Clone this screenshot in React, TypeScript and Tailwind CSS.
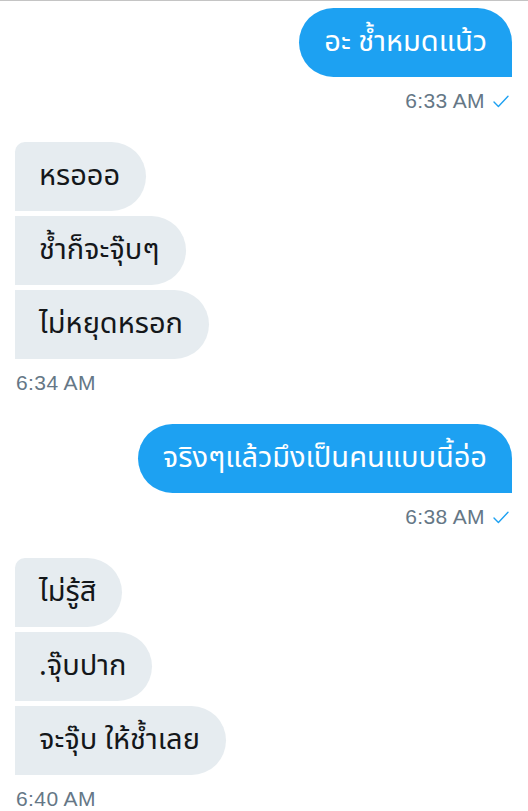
import React from 'react';

type Msg = { text: string };

interface Group {
  side: 'me' | 'them';
  messages: Msg[];
  time: string;
}

const groups: Group[] = [
  { side: 'me', messages: [{ text: 'อะ ช้ำหมดแน้ว' }], time: '6:33 AM' },
  {
    side: 'them',
    messages: [{ text: 'หรอออ' }, { text: 'ช้ำก็จะจุ๊บๆ' }, { text: 'ไม่หยุดหรอก' }],
    time: '6:34 AM',
  },
  { side: 'me', messages: [{ text: 'จริงๆแล้วมึงเป็นคนแบบนี้อ่อ' }], time: '6:38 AM' },
  {
    side: 'them',
    messages: [{ text: 'ไม่รู้สิ' }, { text: '.จุ๊บปาก' }, { text: 'จะจุ๊บ ให้ช้ำเลย' }],
    time: '6:40 AM',
  },
];

const Check = () => (
  <svg width="16" height="13" viewBox="0 0 16 13" fill="none" className="ml-[8px]">
    <path d="M1 7 L5.4 11.4 L15 1.2" stroke="#1DA1F2" strokeWidth="1.4" strokeLinecap="round" strokeLinejoin="round" />
  </svg>
);

const App: React.FC = () => {
  return (
    <div
      className="w-[528px] h-[811px] overflow-hidden bg-white border-t border-[#c4c4c4] pt-[7px] px-[15px]"
      style={{ fontFamily: '"Noto Sans Thai", "Noto Sans", "Liberation Sans", sans-serif' }}
    >
      {groups.map((g, gi) => (
        <div key={gi} className={gi === 0 ? '' : 'mt-[29px]'}>
          <div className={`flex flex-col gap-[5px] ${g.side === 'me' ? 'items-end pr-px' : 'items-start'}`}>
            {g.messages.map((m, mi) =>
              g.side === 'me' ? (
                <div
                  key={mi}
                  className="h-[69px] flex items-center px-[25px] bg-[#1DA1F2] text-white text-[29px] rounded-[35px] rounded-br-none"
                >
                  {m.text}
                </div>
              ) : (
                <div
                  key={mi}
                  className={`h-[69px] flex items-center pl-[24px] pr-[26px] bg-[#E6ECF0] text-[#14171A] text-[29px] rounded-r-[35px] ${
                    mi === 0 ? 'rounded-tl-[10px]' : ''
                  }`}
                >
                  {m.text}
                </div>
              )
            )}
          </div>
          <div
            className={`mt-[12px] h-[24px] flex items-center text-[21px] tracking-[0.4px] text-[#657786] ${
              g.side === 'me' ? 'justify-end pr-[4px]' : 'justify-start pl-px'
            }`}
            style={{ fontFamily: '"Liberation Sans", Arial, sans-serif' }}
          >
            <span>{g.time}</span>
            {g.side === 'me' && <Check />}
          </div>
        </div>
      ))}
    </div>
  );
};

export default App;
